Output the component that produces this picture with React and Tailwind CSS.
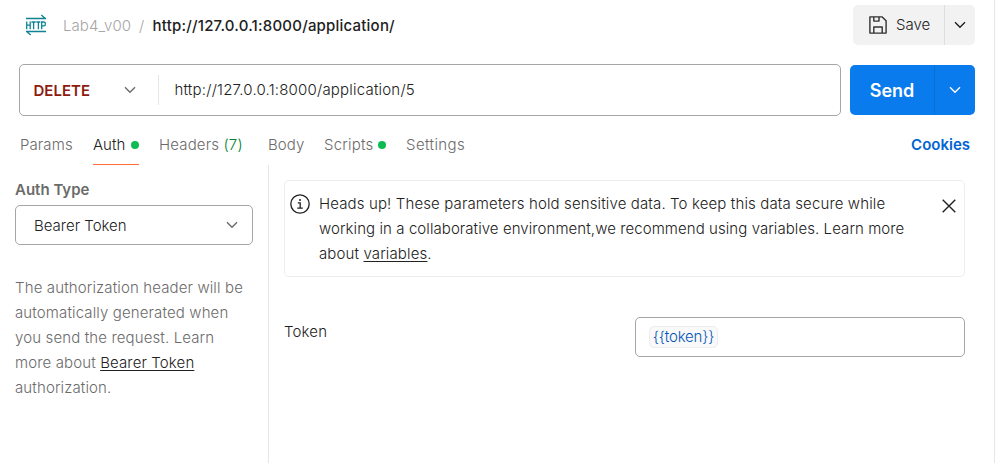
function Chevron({ className = "" }) {
  return (
    <svg className={className} width="12" height="8" viewBox="0 0 12 8" fill="none" stroke="currentColor" strokeWidth="1.4">
      <path d="M1 1.2 6 6.2 11 1.2" />
    </svg>
  );
}

function HttpIcon() {
  return (
    <svg width="22" height="22" viewBox="0 0 22 22" fill="none" stroke="#0f8394" strokeWidth="1.3">
      <path d="M1 4.5H21M16.3 1 20.3 4.5" />
      <path d="M21 17.5H1M5.7 21 1.7 17.5" />
      <path d="M1.7 7.4V15.2M5.2 7.4V15.2M1.7 11.2H5.2" />
      <path d="M6.4 8H10.8M8.6 8V15.2M11.4 8H15.4M13.4 8V15.2" />
      <path d="M16.7 15.2V8H18.8Q20.4 8 20.4 9.9T18.8 11.8H16.7" />
    </svg>
  );
}

function SaveIcon() {
  return (
    <svg width="18" height="18" viewBox="0 0 18 18" fill="none" stroke="#303030" strokeWidth="1.4" strokeLinejoin="round">
      <path d="M.9.9H13.2L17.1 4.8V17.1H.9Z" />
      <path d="M4.8.9V5.1H10V.9M4.8 17V11H13.2V17" />
    </svg>
  );
}

function InfoIcon() {
  return (
    <svg width="20" height="20" viewBox="0 0 20 20" fill="none" stroke="#212121" strokeWidth="1.3">
      <circle cx="10" cy="10" r="9.2" />
      <path d="M7.8 8.8H10.2V14M7.3 14.1H12.8" />
      <circle cx="10" cy="5.9" r="1" fill="#212121" stroke="none" />
    </svg>
  );
}

function Dot() {
  return <span className="size-2 rounded-full bg-[#0cbb52]" />;
}

export default function App() {
  return (
    <div className="h-[463px] w-[998px] overflow-hidden bg-white font-['Inter','Liberation_Sans',sans-serif] text-[15px] leading-[25px] font-[365] text-[#212121]">
      <div className="flex h-full w-[995px] flex-col border-r border-[#e6e6e6]">
        <header className="flex h-[45px] shrink-0 items-end justify-between pr-[19px] pl-[25px]">
          <div className="flex h-10 items-center">
            <HttpIcon />
            <span className="ml-4 w-[76px] tracking-[0.08px] whitespace-nowrap text-[#a6a6a6]">Lab4_v00</span>
            <span className="w-[13.5px] text-[#a6a6a6]">/</span>
            <span className="font-medium tracking-[0.21px] whitespace-nowrap">http://127.0.0.1:8000/application/</span>
          </div>
          <div className="flex h-10 w-[122px] overflow-hidden rounded-[5px] bg-[#f2f2f2]">
            <button className="flex w-[92px] items-center border-r border-[#dedede] pl-4 whitespace-nowrap">
              <SaveIcon />
              <span className="ml-[9px] pb-px">Save</span>
            </button>
            <button className="flex flex-1 items-center justify-center">
              <Chevron />
            </button>
          </div>
        </header>

        <div className="mt-[19px] flex h-[52px] shrink-0 items-center pl-[19px]">
          <div className="flex h-[52px] w-[822px] items-center rounded-[5px] border border-[#a6a6a6]">
            <div className="flex h-[30px] w-[139px] items-center justify-between border-r border-[#e6e6e6] pr-[22px] pl-[13.5px]">
              <span className="font-semibold text-[#8e1a10]">DELETE</span>
              <Chevron className="text-[#6b6b6b]" />
            </div>
            <span className="ml-[15.5px] pb-0.5 tracking-[0.2px]">http://127.0.0.1:8000/application/5</span>
          </div>
          <div className="ml-[9px] flex h-[50px] w-[125px] overflow-hidden rounded-[5px] bg-[#097bed] text-white">
            <button className="flex w-[85px] items-center justify-center border-r border-[#086fd5] text-[18px] font-semibold">Send</button>
            <button className="flex flex-1 items-center justify-center">
              <Chevron />
            </button>
          </div>
        </div>

        <nav className="flex h-[49px] shrink-0 items-start pt-[9px] pl-5 whitespace-nowrap text-[#6b6b6b]">
          <span className="mt-[7px] w-[73px] tracking-[0.1px]">Params</span>
          <span className="flex h-10 w-[46px] items-center justify-between border-b border-[#ff6c37] text-[#212121]">
            Auth <Dot />
          </span>
          <span className="mt-[7px] ml-5 w-[109px] tracking-[0.15px]">
            Headers <span className="text-[#007f31]">(7)</span>
          </span>
          <span className="mt-[7px] w-14 tracking-[0.1px]">Body</span>
          <span className="mt-[7px] flex w-[62px] items-center justify-between tracking-[0.2px]">
            Scripts <Dot />
          </span>
          <span className="mt-[7px] ml-5 tracking-[0.4px]">Settings</span>
          <span className="mt-[7px] mr-6 ml-auto font-semibold text-[#0265d2]">Cookies</span>
        </nav>

        <main className="flex min-h-0 flex-1">
          <aside className="w-[269px] shrink-0 border-r border-[#e6e6e6] pt-3 pl-[15px] text-[#6b6b6b]">
            <div className="font-semibold">Auth Type</div>
            <div className="mt-[3px] flex h-10 w-[238px] items-center justify-between rounded-[5px] border border-[#a6a6a6] pr-[14px] pl-[18px]">
              <span className="text-[#212121]">Bearer Token</span>
              <Chevron />
            </div>
            <p className="mt-[30px] tracking-[0.13px] whitespace-nowrap">
              The authorization header will be<br />
              automatically generated when<br />
              you send the request. Learn<br />
              more about <a className="text-[#212121] underline underline-offset-2">Bearer Token</a><br />
              authorization.
            </p>
          </aside>
          <section className="flex-1 pt-[15px] pl-[15px]">
            <div className="flex h-[97px] w-[681px] items-start rounded-[5px] border border-[#ededed] pt-[10px] pl-[5px]">
              <div className="mt-[3px]"><InfoIcon /></div>
              <p className="ml-[9px] w-[623px] tracking-[0.075px] whitespace-nowrap">
                <span className="tracking-[0.13px]">Heads up! These parameters hold sensitive data. To keep this data secure while</span><br />
                working in a collaborative environment,we recommend using variables. Learn more<br />
                <span className="tracking-[0.13px]">about <a className="underline underline-offset-2">variables</a>.</span>
              </p>
              <svg className="mt-2" width="14" height="14" viewBox="0 0 14 14" stroke="#212121" strokeWidth="1.4">
                <path d="M.7.7 13.3 13.3M13.3.7.7 13.3" />
              </svg>
            </div>
            <div className="mt-10 flex w-[681px] items-start justify-between">
              <span className="mt-[2px] tracking-[0.15px]">Token</span>
              <div className="flex h-10 w-[330px] items-center rounded-[5px] border border-[#a6a6a6] pl-[13px]">
                <span className="flex h-[22px] w-[69px] items-center justify-center rounded-[5px] border border-[#ededed] bg-[#f9f9f9] pb-px tracking-[-0.2px] text-[#0256b8]">{"{{token}}"}</span>
              </div>
            </div>
          </section>
        </main>
      </div>
    </div>
  );
}
